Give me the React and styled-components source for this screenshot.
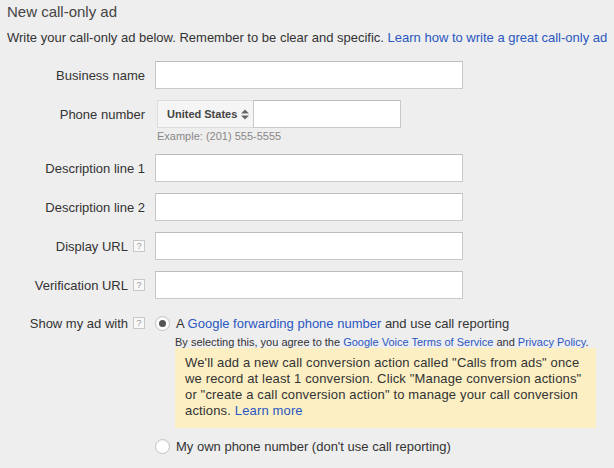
import styled, { createGlobalStyle } from 'styled-components';

const GlobalStyle = createGlobalStyle`
  body {
    margin: 0;
    background: #eeeeee;
    font-family: Arial, "Liberation Sans", sans-serif;
    color: #333;
  }
`;

const Page = styled.div`
  padding: 3px 0 0 7px;
  height: 468px;
  box-sizing: border-box;
  overflow: hidden;
`;

const Title = styled.h1`
  font-size: 15px;
  font-weight: normal;
  color: #444;
  margin: 0 0 9px;
  line-height: 18px;
`;

const Intro = styled.p`
  font-size: 13px;
  margin: 0 0 15px;
  line-height: 16px;
  color: #333;
  white-space: nowrap;
`;

const Link = styled.a`
  color: #2a57c1;
  text-decoration: none;
`;

const Form = styled.div`
  display: grid;
  grid-template-columns: 138px 1fr;
  column-gap: 10px;
  row-gap: 11px;
  align-items: start;
`;

const Label = styled.div`
  display: flex;
  align-items: center;
  justify-content: flex-end;
  gap: 5px;
  height: ${p => p.$h || 28}px;
  font-size: 13px;
  color: #333;
  white-space: nowrap;
`;

const Help = styled.span`
  width: 10px;
  height: 10px;
  border: 1px solid #c8c8c8;
  background: #f8f8f8;
  color: #999;
  font-size: 9px;
  line-height: 10px;
  text-align: center;
`;

const Input = styled.div`
  width: ${p => p.$w || 308}px;
  height: 28px;
  box-sizing: border-box;
  background: #fff;
  border: 1px solid #c9c9c9;
  border-top-color: #bdbdbd;
`;

const PhoneGroup = styled.div`
  display: flex;
  margin-left: 2px;
`;

const CountrySelect = styled.div`
  width: 96px;
  height: 28px;
  box-sizing: border-box;
  display: flex;
  align-items: center;
  gap: 4px;
  padding-left: 9px;
  background: #f5f5f5;
  border: 1px solid #dcdcdc;
  border-right: none;
  font-size: 11px;
  font-weight: bold;
  color: #444;
`;

const Hint = styled.div`
  font-size: 11px;
  color: #888;
  margin: 2px 0 0 2px;
  line-height: 13px;
`;

const Options = styled.div`
  display: flex;
  flex-direction: column;
`;

const OptionRow = styled.div`
  display: flex;
  align-items: center;
  gap: 6px;
  height: ${p => p.$h || 18}px;
  font-size: 13px;
  color: #333;
  margin-top: ${p => p.$mt || 0}px;
`;

const Radio = styled.span`
  width: 13px;
  height: 13px;
  border-radius: 50%;
  border: 1px solid #c2c2c2;
  background: #fff;
  display: flex;
  align-items: center;
  justify-content: center;
  box-shadow: inset 0 1px 1px rgba(0,0,0,0.05);
  &::after {
    content: '';
    display: ${p => (p.$checked ? 'block' : 'none')};
    width: 7px;
    height: 7px;
    border-radius: 50%;
    background: #555;
  }
`;

const Agree = styled.div`
  font-size: 11px;
  color: #333;
  margin: 0 0 0 20px;
  line-height: 12px;
`;

const Notice = styled.div`
  margin: 0 0 0 20px;
  width: 401px;
  padding: 7px 10px 9px;
  background: #fbefc3;
  font-size: 13px;
  line-height: 16px;
  color: #333;
  letter-spacing: 0.15px;
`;

export default function App() {
  return (
    <Page>
      <GlobalStyle />
      <Title>New call-only ad</Title>
      <Intro>
        Write your call-only ad below. Remember to be clear and specific.{' '}
        <Link>Learn how to write a great call-only ad</Link>
      </Intro>
      <Form>
        <Label>Business name</Label>
        <Input />

        <Label>Phone number</Label>
        <div>
          <PhoneGroup>
            <CountrySelect>
              United States
              <svg width="8" height="11" viewBox="0 0 8 11">
                <path d="M0 4.5 L4 0.5 L8 4.5 Z M0 6.5 L8 6.5 L4 10.5 Z" fill="#666" />
              </svg>
            </CountrySelect>
            <Input $w={148} />
          </PhoneGroup>
          <Hint>Example: (201) 555-5555</Hint>
        </div>

        <Label>Description line 1</Label>
        <Input />

        <Label>Description line 2</Label>
        <Input />

        <Label>Display URL <Help>?</Help></Label>
        <Input />

        <Label>Verification URL <Help>?</Help></Label>
        <Input />

        <Label $h={26}>Show my ad with <Help>?</Help></Label>
        <Options>
          <OptionRow $h={26}>
            <Radio $checked />
            <span>A <Link>Google forwarding phone number</Link> and use call reporting</span>
          </OptionRow>
          <Agree>
            By selecting this, you agree to the <Link>Google Voice Terms of Service</Link> and <Link>Privacy Policy</Link>.
          </Agree>
          <Notice>
            We'll add a new call conversion action called "Calls from ads" once we record at least 1 conversion. Click "Manage conversion actions" or "create a call conversion action" to manage your call conversion actions. <Link>Learn more</Link>
          </Notice>
          <OptionRow $mt={9}>
            <Radio />
            <span>My own phone number (don't use call reporting)</span>
          </OptionRow>
        </Options>
      </Form>
    </Page>
  );
}
